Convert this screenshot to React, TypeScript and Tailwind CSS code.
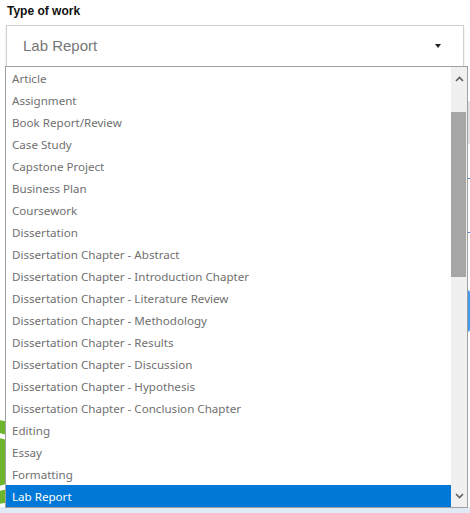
import React from 'react';

const options = [
  'Article',
  'Assignment',
  'Book Report/Review',
  'Case Study',
  'Capstone Project',
  'Business Plan',
  'Coursework',
  'Dissertation',
  'Dissertation Chapter - Abstract',
  'Dissertation Chapter - Introduction Chapter',
  'Dissertation Chapter - Literature Review',
  'Dissertation Chapter - Methodology',
  'Dissertation Chapter - Results',
  'Dissertation Chapter - Discussion',
  'Dissertation Chapter - Hypothesis',
  'Dissertation Chapter - Conclusion Chapter',
  'Editing',
  'Essay',
  'Formatting',
  'Lab Report',
];

function Chevron({ up }: { up?: boolean }) {
  return (
    <svg width="9" height="6" viewBox="0 0 9 6" className="block">
      <path
        d={up ? 'M1 5 L4.5 1.5 L8 5' : 'M1 1 L4.5 4.5 L8 1'}
        fill="none"
        stroke="#606060"
        strokeWidth="1.6"
      />
    </svg>
  );
}

export default function App() {
  const selected = 'Lab Report';

  return (
    <div className="relative h-[513px] w-[470px] overflow-hidden bg-white font-['Liberation_Sans',Arial,sans-serif]">
      <div className="px-[7px] pt-[4px] text-[12px] font-bold leading-[14px] text-[#111]">Type of work</div>

      <div className="mx-[6px] mt-[7px] flex h-[42px] items-center justify-between border border-[#d0d0d0] bg-white pl-[16px] pr-[22px] shadow-[0_1px_2px_rgba(0,0,0,0.12)]">
        <span className="text-[15px] text-[#777]">{selected}</span>
        <span className="h-0 w-0 border-x-[3.5px] border-t-[4px] border-x-transparent border-t-[#222]" />
      </div>

      {/* page content hidden under the open list */}
      <div className="flex flex-col">
        <div className="ml-[20px] mt-[34px] h-[43px] border-r-[2px] border-[#e2e2e2] bg-[#fafafa]" />
        <div className="ml-[20px] mt-[34px] h-[1px] bg-[#3b8fe3]" />
        <div className="ml-[20px] mt-[53px] flex justify-end">
          <div className="h-[1px] flex-1 bg-[#3b8fe3]" />
        </div>
        <div className="ml-[460px] mt-[3px] h-[8px] w-[2px] bg-[#8a6d8a]" />
        <div className="ml-[20px] mt-[46px] h-[42px] rounded-[3px] bg-[#3f9af0]" />
        <div className="-ml-[46px] mt-[88px] flex h-[84px] w-[84px] items-center justify-center rounded-full bg-[#6cb52d]">
          <div className="h-[58px] w-[58px] rounded-full border-[5px] border-white" />
        </div>
      </div>
      <div className="absolute inset-x-0 bottom-0 h-[6px] bg-[#dfeaf6]" />

      {/* open option list */}
      <div className="absolute left-[5px] top-[66px] flex h-[442px] w-[463px] border border-[#a0a0a0] bg-white">
        <ul className="flex-1 font-['Noto_Sans','Open_Sans',sans-serif] text-[11.6px] text-[#707070]">
          {options.map((o) => (
            <li
              key={o}
              className={
                o === selected
                  ? 'flex h-[22px] items-center bg-[#0078d7] pl-[6px] pt-[1px] text-white'
                  : 'flex h-[22px] items-center pl-[6px] pt-[1px]'
              }
            >
              {o}
            </li>
          ))}
        </ul>
        <div className="flex w-[16px] flex-col bg-[#f0f0f0]">
          <div className="flex h-[22px] items-center justify-center pt-[2px]">
            <Chevron up />
          </div>
          <div className="mt-[23px] h-[165px] w-[15px] bg-[#a6a6a6]" />
          <div className="flex-1" />
          <div className="flex h-[22px] items-center justify-center">
            <Chevron />
          </div>
        </div>
      </div>
    </div>
  );
}
